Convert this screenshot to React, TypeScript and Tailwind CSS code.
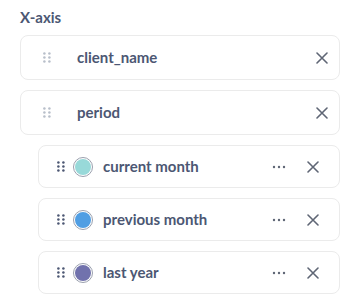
import { Fragment } from 'react';

const Grip = ({ className }: { className: string }) => (
  <svg width="8" height="11" viewBox="0 0 8 11" className={className} aria-hidden="true">
    {[1.4, 5.5, 9.6].map(cy => (
      <Fragment key={cy}>
        <circle cx="1.4" cy={cy} r="1.25" fill="currentColor" />
        <circle cx="6.4" cy={cy} r="1.25" fill="currentColor" />
      </Fragment>
    ))}
  </svg>
);

const Close = () => (
  <svg width="12" height="12" viewBox="0 0 12 12" className="text-[#5f6675]" aria-hidden="true">
    <path d="M1 1 L11 11 M11 1 L1 11" stroke="currentColor" strokeWidth="1.6" strokeLinecap="round" />
  </svg>
);

const Dots = () => (
  <svg width="14" height="4" viewBox="0 0 14 4" className="text-[#5f6675]" aria-hidden="true">
    <circle cx="2" cy="2" r="1.2" fill="currentColor" />
    <circle cx="7" cy="2" r="1.2" fill="currentColor" />
    <circle cx="12" cy="2" r="1.2" fill="currentColor" />
  </svg>
);

const columns = ['client_name', 'period'];

const series = [
  { name: 'current month', color: 'bg-[#98d9d9]' },
  { name: 'previous month', color: 'bg-[#509ee3]' },
  { name: 'last year', color: 'bg-[#7172ad]' },
];

export default function App() {
  return (
    <div className="w-[357px] h-[302px] bg-white pl-5 pr-[17px] pt-[8px] font-['Lato','Liberation_Sans',sans-serif] text-[#4c5773]">
      <div className="text-[15px] font-bold leading-[19px]">X-axis</div>
      <div className="mt-[8px] flex flex-col gap-[10px]">
        {columns.map(col => (
          <div key={col} className="flex h-[45px] items-center rounded-lg border border-[#ebebeb] bg-white pl-[22px] pr-[11px]">
            <Grip className="text-[#b8bfca]" />
            <span className="ml-[26px] flex-1 text-[15px] font-bold">{col}</span>
            <Close />
          </div>
        ))}
        <div className="ml-[18px] flex flex-col gap-[10px]">
          {series.map(s => (
            <div key={s.name} className="flex h-[43px] items-center rounded-lg border border-[#ebebeb] bg-white pl-[18px] pr-[20px]">
              <Grip className="text-[#4c5773]" />
              <span className="ml-[8px] flex h-5 w-5 items-center justify-center rounded-full border border-[#9aa0ae] bg-white">
                <span className={`h-4 w-4 rounded-full ${s.color}`} />
              </span>
              <span className="ml-[10px] flex-1 text-[15px] font-bold">{s.name}</span>
              <Dots />
              <span className="ml-[21px] flex">
                <Close />
              </span>
            </div>
          ))}
        </div>
      </div>
    </div>
  );
}
